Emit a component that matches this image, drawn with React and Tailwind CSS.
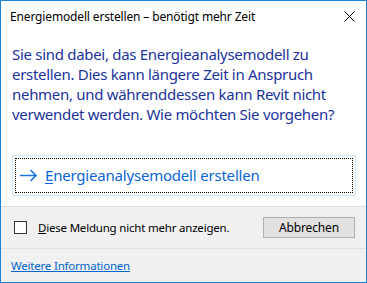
import React from "react";

export default function App() {
  return (
    <div
      className="w-[367px] h-[283px] border border-[#1883d7] bg-white flex flex-col overflow-hidden"
      style={{ fontFamily: '"Noto Sans", "Open Sans", sans-serif' }}
    >
      <div className="h-[31px] flex items-center justify-between pl-[9px] pr-[10px] shrink-0">
        <span className="text-[12px] tracking-[-0.15px] text-black leading-none">
          Energiemodell erstellen – benötigt mehr Zeit
        </span>
        <svg width="11" height="11" viewBox="0 0 11 11" className="mr-[1px]">
          <path d="M0.5 0.5 L10.5 10.5 M10.5 0.5 L0.5 10.5" stroke="#000" strokeWidth="1" fill="none" />
        </svg>
      </div>
      <div className="flex-1 flex flex-col px-[11px]">
        <p className="mt-[12px] text-[15px] tracking-[-0.3px] leading-[20px] text-[#1c3399] pr-[6px]">
          Sie sind dabei, das Energieanalysemodell zu erstellen. Dies kann längere Zeit in Anspruch nehmen, und währenddessen kann Revit nicht verwendet werden. Wie möchten Sie vorgehen?
        </p>
        <div className="mt-[31px] h-[41px] w-[344px] border border-[#cce4f7] p-[2px]">
          <div className="h-full w-full border border-dotted border-black flex items-center pl-[4px]">
            <svg width="18" height="13" viewBox="0 0 18 13" className="shrink-0">
              <path d="M0 6.5 H16 M10.5 1 L16 6.5 L10.5 12" stroke="#1a73d9" strokeWidth="1.6" fill="none" />
            </svg>
            <span className="ml-[7px] text-[15px] tracking-[-0.2px] text-[#0b66cf] leading-none">
              <span className="underline underline-offset-2">E</span>nergieanalysemodell erstellen
            </span>
          </div>
        </div>
      </div>
      <div className="h-[76px] shrink-0 bg-[#f0f0f0] border-t border-[#dfdfdf] flex flex-col">
        <div className="h-[42px] flex items-center pl-[13px] pr-[11px] border-b border-[#dfdfdf]">
          <div className="w-[13px] h-[13px] border border-[#333] bg-white shrink-0" />
          <span className="ml-[11px] text-[11.5px] tracking-[-0.2px] text-black">
            <span className="underline">D</span>iese Meldung nicht mehr anzeigen.
          </span>
          <div className="ml-auto w-[92px] h-[21px] border border-[#adadad] bg-[#e1e1e1] flex items-center justify-center text-[12px] tracking-[-0.15px] text-black">
            Abbrechen
          </div>
        </div>
        <div className="flex-1 flex items-center pl-[10px]">
          <span className="text-[11.5px] tracking-[-0.2px] text-[#0066cc] underline">Weitere Informationen</span>
        </div>
      </div>
    </div>
  );
}
